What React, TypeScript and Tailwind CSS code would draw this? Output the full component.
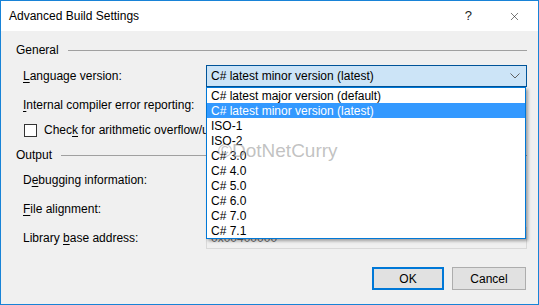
import { X } from "lucide-react";

const versions = [
  "C# latest major version (default)",
  "C# latest minor version (latest)",
  "ISO-1",
  "ISO-2",
  "C# 3.0",
  "C# 4.0",
  "C# 5.0",
  "C# 6.0",
  "C# 7.0",
  "C# 7.1",
];

function Chevron() {
  return (
    <svg width="10" height="6" viewBox="0 0 10 6" className="text-[#606060]">
      <path d="M0.5 0.5 L5 5 L9.5 0.5" fill="none" stroke="currentColor" strokeWidth="1" />
    </svg>
  );
}

function GroupHeader({ label }: { label: string }) {
  return (
    <div className="flex h-[16px] items-center pl-[15px] pr-[11px]">
      <span className="leading-none">{label}</span>
      <div className="ml-[9px] h-px flex-1 bg-[#a0a0a0]" />
    </div>
  );
}

function Row({ children, control }: { children: React.ReactNode; control?: React.ReactNode }) {
  return (
    <div className="flex h-[22px] items-center pl-[22px] pr-[11px]">
      <span className="w-[183px] leading-none">{children}</span>
      <div className="flex-1">{control}</div>
    </div>
  );
}

// combos that sit hidden under the open list
function PlainCombo() {
  return <div className="mr-[3px] h-[22px] border border-[#adadad] bg-[#e1e1e1]" />;
}

export default function App() {
  return (
    <div
      className="relative h-[305px] w-[539px] overflow-hidden border border-[#1883d7] bg-[#f0f0f0] text-[12px] text-black"
      style={{ fontFamily: '"Liberation Sans", Arial, sans-serif' }}
    >
      {/* title bar */}
      <div className="flex h-[30px] items-center bg-white pl-[8px]">
        <span className="flex-1">Advanced Build Settings</span>
        <span className="mr-[36px] text-[13px] text-[#222]">?</span>
        <X className="mr-[17px] h-[13px] w-[13px] text-[#222]" strokeWidth={1.1} />
      </div>

      {/* body */}
      <div className="flex flex-col">
        <div className="mt-[11px]">
          <GroupHeader label="General" />
        </div>
        <div className="mt-[7px]">
          <Row
            control={
              <div className="flex h-[22px] items-center border border-[#005499] bg-[#cce4f7] pl-[4px] pr-[6px]">
                <span className="flex-1">C# latest minor version (latest)</span>
                <Chevron />
              </div>
            }
          >
            <u className="underline-offset-2">L</u>anguage version:
          </Row>
        </div>
        <div className="mt-[7px]">
          <Row control={<PlainCombo />}>
            <u className="underline-offset-2">I</u>nternal compiler error reporting:
          </Row>
        </div>
        <div className="mt-[5px] flex h-[18px] items-center pl-[23px]">
          <div className="h-[13px] w-[13px] border border-[#333] bg-white" />
          <span className="ml-[7px] leading-none">
            Chec<u className="underline-offset-2">k</u> for arithmetic overflow/underflow
          </span>
        </div>
        <div className="mt-[8px]">
          <GroupHeader label="Output" />
        </div>
        <div className="mt-[6px]">
          <Row control={<PlainCombo />}>
            D<u className="underline-offset-2">e</u>bugging information:
          </Row>
        </div>
        <div className="mt-[7px]">
          <Row control={<PlainCombo />}>
            <u className="underline-offset-2">F</u>ile alignment:
          </Row>
        </div>
        <div className="mt-[7px]">
          <Row
            control={
              <div className="flex h-[22px] items-center border border-[#d9d9d9] bg-[#f0f0f0] pl-[4px] text-[#6d6d6d]">
                0x00400000
              </div>
            }
          >
            Library <u className="underline-offset-2">b</u>ase address:
          </Row>
        </div>
        <div className="mt-[18px] flex justify-end gap-[8px] pr-[12px]">
          <button className="h-[23px] w-[72px] border-2 border-[#0078d7] bg-[#e1e1e1]">OK</button>
          <button className="h-[23px] w-[74px] border border-[#adadad] bg-[#e1e1e1]">Cancel</button>
        </div>
      </div>

      {/* open dropdown list */}
      <div className="absolute left-[205px] top-[86px] w-[320px] border border-[#0078d7] bg-white shadow-[2px_2px_3px_rgba(0,0,0,0.35)]">
        {versions.map((v, i) => (
          <div
            key={v}
            className={
              i === 1
                ? "flex h-[15px] items-center bg-[#3399ff] pl-[4px] text-white"
                : "flex h-[15px] items-center pl-[4px]"
            }
          >
            {v}
          </div>
        ))}
        <span className="pointer-events-none absolute left-[11px] top-[49px] text-[19px] text-[#999]/60">
          ©DotNetCurry
        </span>
      </div>
    </div>
  );
}
